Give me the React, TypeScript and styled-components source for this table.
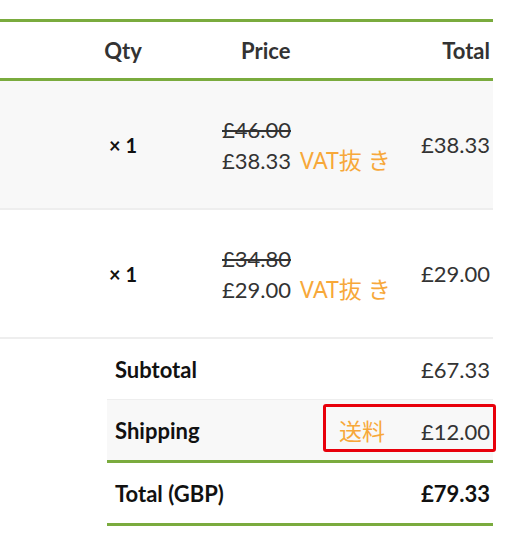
import React from "react";
import styled, { createGlobalStyle } from "styled-components";

const Global = createGlobalStyle`
  html, body { margin: 0; padding: 0; background: #fff; }
  body { font-family: Lato, "Noto Sans CJK JP", sans-serif; color: #333; }
`;

const GREEN = "#7aab3e";
const ORANGE = "#f7a83a";

const Page = styled.div`
  padding-top: 19px;
  width: 493px;
`;

const Grid = styled.div`
  display: grid;
  grid-template-columns: 95px 56px 1fr 100px;
`;

const HeadRow = styled(Grid)`
  border-top: 3px solid ${GREEN};
  border-bottom: 3px solid ${GREEN};
  height: 56px;
  align-items: center;
  font-weight: 700;
  font-size: 22px;
  color: #333;
`;

const Cell = styled.div<{ $align?: "left" | "center" | "right"; $pad?: number }>`
  text-align: ${(p) => p.$align || "left"};
  padding-left: ${(p) => p.$pad || 0}px;
  padding-right: ${(p) => (p.$align === "right" ? 3 : 0)}px;
  white-space: nowrap;
`;

const ItemRow = styled(Grid)<{ $shade?: boolean }>`
  height: 127px;
  align-items: center;
  background: ${(p) => (p.$shade ? "#f8f8f8" : "#fff")};
  border-bottom: 2px solid #eeeeee;
  font-size: 22px;
`;

const Qty = styled(Cell)`
  font-weight: 700;
  font-size: 20px;
  color: #111;
`;

const PriceBox = styled.div`
  line-height: 31px;
  padding-left: 71px;
  white-space: nowrap;
`;

const Old = styled.del`
  color: #333;
  text-decoration-thickness: 2px;
`;

const Note = styled.span`
  color: ${ORANGE};
  font-family: "Noto Sans", "Noto Sans CJK JP", sans-serif;
  font-size: 23px;
  margin-left: 9px;
`;

const Totals = styled.div`
  margin-left: 107px;
`;

const TotalRow = styled.div<{ $shade?: boolean; $line?: "grey" | "green" }>`
  position: relative;
  display: flex;
  align-items: center;
  justify-content: space-between;
  height: 60px;
  padding: 0 3px 0 8px;
  font-size: 22px;
  background: ${(p) => (p.$shade ? "#f8f8f8" : "#fff")};
  border-bottom: ${(p) =>
    p.$line === "green" ? `3px solid ${GREEN}` : p.$line === "grey" ? "1px solid #eee" : "none"};
`;

const Label = styled.span`
  font-weight: 700;
  color: #111;
`;

const Value = styled.span<{ $bold?: boolean }>`
  font-weight: ${(p) => (p.$bold ? 700 : 400)};
  color: ${(p) => (p.$bold ? "#111" : "#333")};
`;

const ShipNote = styled.span`
  color: ${ORANGE};
  font-family: "Noto Sans CJK JP", sans-serif;
  font-size: 23px;
  margin-right: 36px;
`;

const Highlight = styled.div`
  position: absolute;
  left: 216px;
  right: -3px;
  top: 4px;
  bottom: 8px;
  border: 3px solid #e8000b;
  border-radius: 3px;
  pointer-events: none;
`;

export default function App() {
  return (
    <>
      <Global />
      <Page>
        <HeadRow>
          <Cell />
          <Cell $align="center">Qty</Cell>
          <Cell $pad={90}>Price</Cell>
          <Cell $align="right">Total</Cell>
        </HeadRow>
        <ItemRow $shade>
          <Cell />
          <Qty $align="center">× 1</Qty>
          <PriceBox>
            <div><Old>£46.00</Old></div>
            <div>£38.33<Note>VAT抜 き</Note></div>
          </PriceBox>
          <Cell $align="right">£38.33</Cell>
        </ItemRow>
        <ItemRow>
          <Cell />
          <Qty $align="center">× 1</Qty>
          <PriceBox>
            <div><Old>£34.80</Old></div>
            <div>£29.00<Note>VAT抜 き</Note></div>
          </PriceBox>
          <Cell $align="right">£29.00</Cell>
        </ItemRow>
        <Totals>
          <TotalRow $line="grey">
            <Label>Subtotal</Label>
            <Value>£67.33</Value>
          </TotalRow>
          <TotalRow $shade $line="green">
            <Label>Shipping</Label>
            <span>
              <ShipNote>送料</ShipNote>
              <Value>£12.00</Value>
            </span>
            <Highlight />
          </TotalRow>
          <TotalRow $line="green">
            <Label>Total (GBP)</Label>
            <Value $bold>£79.33</Value>
          </TotalRow>
        </Totals>
      </Page>
    </>
  );
}
